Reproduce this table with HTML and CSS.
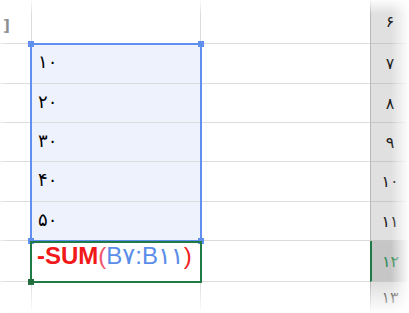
FILE: index.html
```html
<!DOCTYPE html>
<html lang="fa">
<head>
<meta charset="utf-8">
<link rel="stylesheet" href="styles.css">
</head>
<body>
<div class="sheet">
  <div class="grid">
    <div class="c a"><span class="cut">]</span></div><div class="c b"></div><div class="c cc"></div><div class="h">۶</div>
    <div class="c a"></div><div class="c b sel"><span class="num">۱۰</span></div><div class="c cc"></div><div class="h">۷</div>
    <div class="c a"></div><div class="c b sel"><span class="num">۲۰</span></div><div class="c cc"></div><div class="h">۸</div>
    <div class="c a"></div><div class="c b sel"><span class="num">۳۰</span></div><div class="c cc"></div><div class="h">۹</div>
    <div class="c a"></div><div class="c b sel"><span class="num">۴۰</span></div><div class="c cc"></div><div class="h">۱۰</div>
    <div class="c a"></div><div class="c b sel"><span class="num">۵۰</span></div><div class="c cc"></div><div class="h">۱۱</div>
    <div class="c a"></div><div class="c b formula" dir="ltr"><span class="fn">-SUM</span><span class="par">(</span><span class="ref">B۷:B۱۱</span><span class="par2">)</span></div><div class="c cc"></div><div class="h active">۱۲</div>
    <div class="c a"></div><div class="c b"></div><div class="c cc"></div><div class="h">۱۳</div>
  </div>
  <div class="selection">
    <span class="hd tl"></span><span class="hd tr"></span><span class="hd bl"></span><span class="hd br"></span>
  </div>
  <div class="activecell"><span class="gh"></span></div>
  <div class="fade"></div>
</div>
</body>
</html>
```
FILE: styles.css
```css
html, body {
  margin: 0;
  padding: 0;
  background: #fff;
}
.sheet {
  position: relative;
  width: 409px;
  height: 313px;
  overflow: hidden;
  font-family: "DejaVu Sans", sans-serif;
}
.grid {
  display: grid;
  grid-template-columns: 31px 169px 170px 39px;
  grid-template-rows: 44px 40px 39px 39px 40px 39px 41px 31px;
}
.c {
  box-sizing: border-box;
  border-bottom: 1px solid #dcdcdc;
  display: flex;
  align-items: center;
}
.b, .cc {
  border-left: 1px solid #dcdcdc;
}
.sel {
  background: #edf2fd;
}
.cut {
  font-family: "DejaVu Sans", sans-serif;
  font-size: 15px;
  font-weight: bold;
  color: #8a8a8a;
  margin-left: 3px;
  margin-top: 8px;
}
.num {
  font-size: 18px;
  color: #000;
  padding-left: 6px;
  margin-top: -4px;
}
.h {
  box-sizing: border-box;
  background: #e0e0e0;
  border-left: 1px solid #b8b8b8;
  border-bottom: 1px solid #c8c8c8;
  display: flex;
  align-items: center;
  justify-content: center;
  font-size: 16px;
  color: #1a1a1a;
}
.h.active {
  background: #c6c6c6;
  color: #2f8a55;
  border-left: 2px solid #1f7a45;
}
.formula {
  align-items: flex-start;
  padding-top: 2px;
  padding-left: 5px;
  font-family: "Liberation Sans", "DejaVu Sans", sans-serif;
  font-size: 24px;
  line-height: 26px;
}
.fn {
  color: #f01818;
  font-weight: bold;
}
.par {
  color: #f0546a;
}
.ref {
  color: #5b8de8;
}
.par2 {
  color: #f02020;
}
.selection {
  position: absolute;
  left: 30px;
  top: 43px;
  width: 168px;
  height: 195px;
  border: 2px solid #5f90ef;
}
.hd {
  position: absolute;
  width: 6px;
  height: 6px;
  background: #5f90ef;
}
.tl { left: -4px; top: -4px; }
.tr { right: -4px; top: -4px; }
.bl { left: -4px; bottom: -4px; }
.br { right: -4px; bottom: -4px; }
.activecell {
  position: absolute;
  left: 30px;
  top: 241px;
  width: 168px;
  height: 38px;
  border: 2px solid #1f7a45;
}
.gh {
  position: absolute;
  left: -4px;
  bottom: -4px;
  width: 6px;
  height: 6px;
  background: #1f6e3c;
}
.fade {
  position: absolute;
  inset: 0;
  pointer-events: none;
  background:
    linear-gradient(to left, rgba(255,255,255,0.97) 0, rgba(255,255,255,0) 18px),
    linear-gradient(to top, rgba(255,255,255,0.97) 0, rgba(255,255,255,0) 30px),
    linear-gradient(to bottom, rgba(255,255,255,0.9) 0, rgba(255,255,255,0) 14px),
    linear-gradient(to right, rgba(255,255,255,0.5) 0, rgba(255,255,255,0) 8px);
}
```
